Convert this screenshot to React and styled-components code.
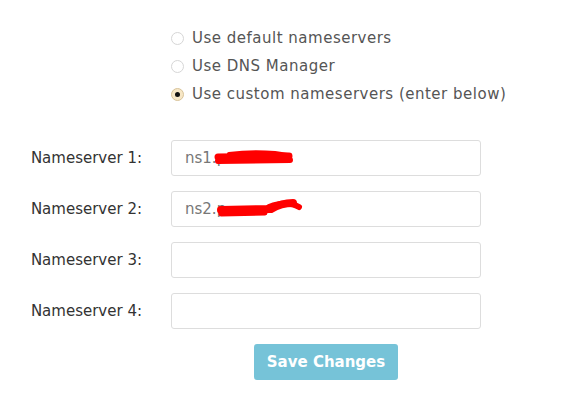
import React from "react";
import styled, { createGlobalStyle } from "styled-components";

const Global = createGlobalStyle`
  html, body { margin: 0; padding: 0; background: #fff; }
  body { font-family: "DejaVu Sans", "Open Sans", sans-serif; }
`;

const Page = styled.div`
  width: 575px;
  height: 406px;
  box-sizing: border-box;
  padding-top: 24px;
`;

const RadioList = styled.div`
  display: flex;
  flex-direction: column;
  margin-left: 171px;
`;

const RadioRow = styled.label`
  display: flex;
  align-items: center;
  height: 28px;
  gap: 8px;
  font-size: 15px;
  color: #555;
  letter-spacing: 0.5px;
`;

const RadioDot = styled.span`
  width: 11px;
  height: 11px;
  border-radius: 50%;
  border: 1px solid ${(p) => (p.$checked ? "#d8c39a" : "#d6d6d6")};
  background: ${(p) => (p.$checked ? "#f7e7c6" : "#fff")};
  display: flex;
  align-items: center;
  justify-content: center;
  flex: none;
  &::after {
    content: "";
    display: ${(p) => (p.$checked ? "block" : "none")};
    width: 5px;
    height: 5px;
    border-radius: 50%;
    background: #111;
  }
`;

const Form = styled.div`
  display: grid;
  grid-template-columns: 142px 310px;
  column-gap: 29px;
  row-gap: 15px;
  margin-top: 32px;
`;

const Label = styled.div`
  display: flex;
  align-items: center;
  justify-content: flex-end;
  font-size: 15px;
  color: #333;
`;

const InputWrap = styled.div`
  position: relative;
  height: 36px;
`;

const Input = styled.input`
  width: 100%;
  height: 36px;
  box-sizing: border-box;
  border: 1px solid #ddd;
  border-radius: 3px;
  padding: 0 13px;
  font-family: inherit;
  font-size: 15px;
  color: #777;
  outline: none;
`;

const Scribble = styled.svg`
  position: absolute;
  left: 0;
  top: 0;
  pointer-events: none;
`;

const ButtonCell = styled.div`
  grid-column: 2;
  display: flex;
  justify-content: center;
`;

const SaveButton = styled.button`
  width: 144px;
  height: 36px;
  border: none;
  border-radius: 3px;
  background: #76c3d8;
  color: #fff;
  font-family: inherit;
  font-weight: 700;
  font-size: 15px;
`;

const radios = [
  { text: "Use default nameservers", checked: false },
  { text: "Use DNS Manager", checked: false },
  { text: "Use custom nameservers (enter below)", checked: true },
];

const scribbles = {
  1: (
    <g fill="none" stroke="#ff0000" strokeLinecap="round" strokeLinejoin="round">
      <path d="M47 17 L118 16" strokeWidth="7" />
      <path d="M47 21 L119 20" strokeWidth="6" />
      <path d="M58 14 Q80 11 104 13 L117 15" strokeWidth="4" />
    </g>
  ),
  2: (
    <g fill="none" stroke="#ff0000" strokeLinecap="round" strokeLinejoin="round">
      <path d="M50 19 L100 18 Q110 12 122 12" strokeWidth="8" />
      <path d="M50 23 L94 22" strokeWidth="5" />
      <path d="M98 16 Q116 9 128 16" strokeWidth="6" />
    </g>
  ),
};

const values = { 1: "ns1.p", 2: "ns2.p", 3: "", 4: "" };

export default function App() {
  return (
    <>
      <Global />
      <Page>
        <RadioList>
          {radios.map((r) => (
            <RadioRow key={r.text}>
              <RadioDot $checked={r.checked} />
              {r.text}
            </RadioRow>
          ))}
        </RadioList>
        <Form>
          {[1, 2, 3, 4].map((n) => (
            <React.Fragment key={n}>
              <Label>Nameserver {n}:</Label>
              <InputWrap>
                <Input defaultValue={values[n]} />
                {scribbles[n] && (
                  <Scribble width="310" height="36" viewBox="0 0 310 36">
                    {scribbles[n]}
                  </Scribble>
                )}
              </InputWrap>
            </React.Fragment>
          ))}
          <ButtonCell>
            <SaveButton>Save Changes</SaveButton>
          </ButtonCell>
        </Form>
      </Page>
    </>
  );
}
